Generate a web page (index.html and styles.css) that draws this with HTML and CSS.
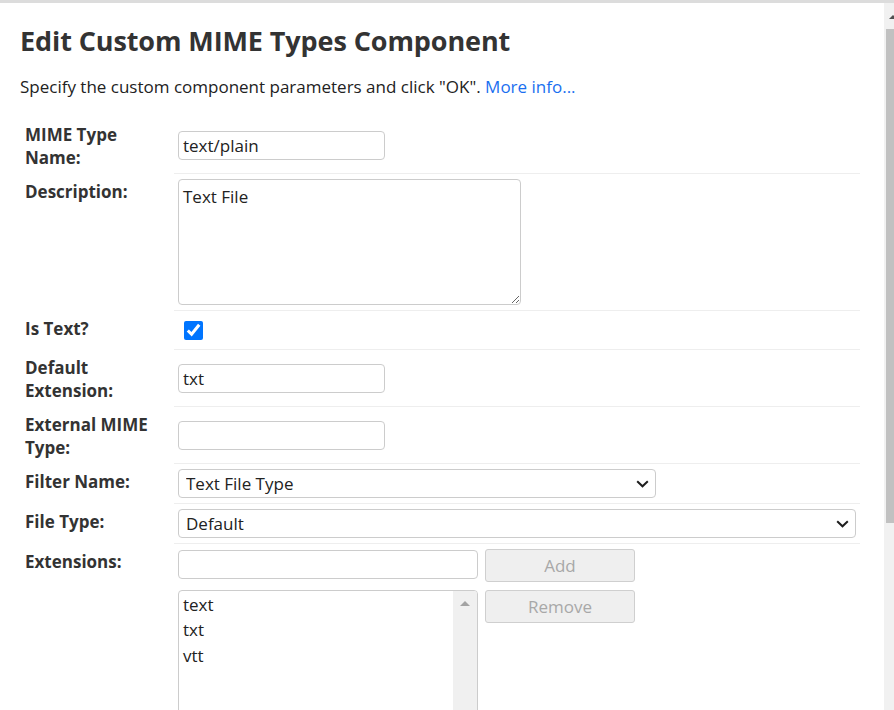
FILE: index.html
```html
<!DOCTYPE html>
<html lang="en">
<head>
<meta charset="utf-8">
<title>Edit Custom MIME Types Component</title>
<link rel="stylesheet" href="styles.css">
</head>
<body>
<div class="frame">
  <div class="window">
    <main class="page">
      <h1 class="title">Edit Custom MIME Types Component</h1>
      <p class="intro">Specify the custom component parameters and click "OK". <a class="link" href="#">More info...</a></p>
      <div class="form">
        <div class="row first">
          <div class="label">MIME Type Name:</div>
          <div class="field"><input class="text-input" type="text" value="text/plain"></div>
        </div>
        <div class="row">
          <div class="label">Description:</div>
          <div class="field"><textarea class="textarea">Text File</textarea></div>
        </div>
        <div class="row">
          <div class="label">Is Text?</div>
          <div class="field"><input class="check" type="checkbox" checked></div>
        </div>
        <div class="row">
          <div class="label">Default Extension:</div>
          <div class="field"><input class="text-input" type="text" value="txt"></div>
        </div>
        <div class="row">
          <div class="label">External MIME Type:</div>
          <div class="field"><input class="text-input" type="text" value=""></div>
        </div>
        <div class="row">
          <div class="label">Filter Name:</div>
          <div class="field">
            <span class="select-wrap filter">
              <select class="select"><option>Text File Type</option></select>
              <svg class="chevron" width="13" height="8" viewBox="0 0 13 8"><path d="M1.2 1.2 L6.5 6.3 L11.8 1.2" fill="none" stroke="#1e1e1e" stroke-width="2"/></svg>
            </span>
          </div>
        </div>
        <div class="row">
          <div class="label">File Type:</div>
          <div class="field">
            <span class="select-wrap full">
              <select class="select"><option>Default</option></select>
              <svg class="chevron" width="13" height="8" viewBox="0 0 13 8"><path d="M1.2 1.2 L6.5 6.3 L11.8 1.2" fill="none" stroke="#1e1e1e" stroke-width="2"/></svg>
            </span>
          </div>
        </div>
        <div class="row">
          <div class="label">Extensions:</div>
          <div class="field ext-field">
            <div class="ext-grid">
              <input class="text-input ext-input" type="text" value="">
              <button class="btn" type="button" disabled>Add</button>
              <div class="listbox" role="listbox">
                <div class="list-items">
                  <div class="list-item" role="option">text</div>
                  <div class="list-item" role="option">txt</div>
                  <div class="list-item" role="option">vtt</div>
                </div>
                <div class="list-track"><span class="list-arrow"></span></div>
              </div>
              <button class="btn" type="button" disabled>Remove</button>
            </div>
          </div>
        </div>
      </div>
    </main>
    <div class="scrollbar" aria-hidden="true">
      <div class="sb-inner">
        <span class="sb-arrow"></span>
        <div class="sb-thumb"></div>
      </div>
    </div>
  </div>
</div>
</body>
</html>
```

FILE: styles.css
```css
* { box-sizing: border-box; }
html, body { margin: 0; padding: 0; background: #fff; }
body {
  font-family: "Open Sans", "Noto Sans", "Liberation Sans", sans-serif;
  font-size: 17px;
  color: #333;
  overflow: hidden;
}
.frame {
  border-top: 3px solid #dcdcdc;
  height: 710px;
}
.window {
  display: flex;
  height: 707px;
}
.page {
  width: 884px;
  padding: 0 24px 0 20px;
}
.title {
  margin: 20px 0 0;
  font-size: 27px;
  line-height: 36px;
  font-weight: 700;
  color: #333;
  letter-spacing: -0.1px;
}
.intro {
  margin: 16px 0 0;
  font-size: 17px;
  line-height: 24px;
  color: #222;
}
.link { color: #1a6ff0; text-decoration: none; }
.form { margin-top: 17px; }
.row {
  display: grid;
  grid-template-columns: 154px 686px;
}
.label {
  padding: 7px 5px 4px;
  font-weight: 700;
  font-size: 17px;
  line-height: 23px;
  color: #333;
}
.field {
  border-top: 1px solid #eee;
  padding: 5px 4px;
  min-height: 39px;
  display: flex;
  align-items: center;
}
.first .field { border-top-color: transparent; }
.text-input {
  width: 207px;
  height: 29px;
  border: 1px solid #ccc;
  border-radius: 4px;
  padding: 0 4px;
  font: inherit;
  font-size: 17px;
  color: #222;
  outline: none;
}
.textarea {
  width: 343px;
  height: 126px;
  border: 1px solid #ccc;
  border-radius: 4px;
  padding: 5px 4px 3px;
  font: inherit;
  font-size: 17px;
  line-height: 24px;
  color: #222;
  display: block;
  outline: none;
}
.check {
  width: 19px;
  height: 19px;
  margin: 0 0 0 6px;
  accent-color: #0075ff;
}
.select-wrap {
  position: relative;
  display: inline-block;
  height: 29px;
}
.select-wrap.filter { width: 478px; }
.select-wrap.full { width: 678px; }
.select {
  appearance: none;
  -webkit-appearance: none;
  width: 100%;
  height: 29px;
  border: 1px solid #ccc;
  border-radius: 4px;
  background: #fff;
  padding: 0 30px 0 7px;
  font: inherit;
  font-size: 17px;
  color: #222;
  outline: none;
}
.chevron {
  position: absolute;
  right: 7px;
  top: 11px;
  pointer-events: none;
}
.ext-field { align-items: flex-start; min-height: 0; }
.ext-grid {
  display: grid;
  grid-template-columns: 300px 150px;
  column-gap: 7px;
  row-gap: 8px;
}
.ext-input {
  width: 300px;
  margin-top: 1px;
}
.btn {
  height: 33px;
  width: 150px;
  background: #efefef;
  border: 1px solid #cfcfcf;
  border-radius: 3px;
  font: inherit;
  font-size: 17px;
  color: #a8a8a8;
  padding: 0;
}
.listbox {
  width: 300px;
  height: 150px;
  border: 1px solid #ccc;
  border-radius: 4px 4px 0 0;
  display: flex;
  overflow: hidden;
}
.list-items {
  flex: 1;
  padding: 1px 4px;
  color: #222;
  font-size: 17px;
  line-height: 25.3px;
}
.list-track {
  width: 24px;
  background: #f0f0f0;
  position: relative;
}
.list-arrow {
  position: absolute;
  left: 7px;
  top: 10px;
  width: 0;
  height: 0;
  border-left: 5px solid transparent;
  border-right: 5px solid transparent;
  border-bottom: 5px solid #a3a3a3;
}
.scrollbar {
  width: 10px;
  overflow: hidden;
  background: #f1f1f1;
}
.sb-inner {
  width: 17px;
  position: relative;
  height: 100%;
}
.sb-arrow {
  position: absolute;
  left: 5px;
  top: 12px;
  width: 0;
  height: 0;
  border-left: 4px solid transparent;
  border-right: 4px solid transparent;
  border-bottom: 4px solid #505050;
}
.sb-thumb {
  position: absolute;
  left: 2px;
  top: 26px;
  width: 13px;
  height: 494px;
  background: #c1c1c1;
}
```
